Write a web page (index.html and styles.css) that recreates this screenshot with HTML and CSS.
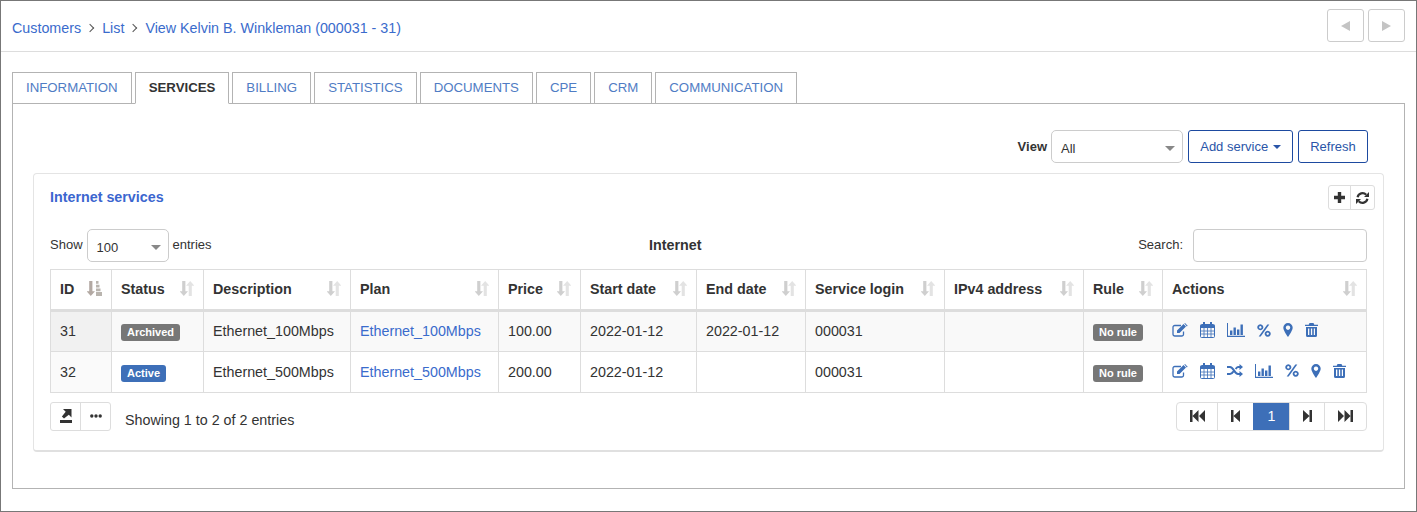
FILE: index.html
```html
<!DOCTYPE html>
<html lang="en">
<head>
    <meta charset="UTF-8">
    <meta name="viewport" content="width=device-width, initial-scale=1.0">
    <title>View customer</title>
    <link rel="stylesheet" href="styles.css">
</head>
<body>
    <!-- Icon set -->
    <svg class="icon-defs" aria-hidden="true">
        <symbol id="i-edit" viewBox="0 0 16 14">
            <path d="M11.5 8.500v2.700A1.800 1.800 0 0 1 9.700 13H2.800A1.800 1.800 0 0 1 1 11.200V4.300A1.800 1.800 0 0 1 2.800 2.500H9" fill="none" stroke="currentColor" stroke-width="1.300"/>
            <path d="M5 7.500 11.500 1l2.500 2.500-6.500 6.500H5zM12.300.3l.7-.3 2.700 2.700-.9.9z" fill="currentColor"/>
        </symbol>
        <symbol id="i-cal" viewBox="0 0 15 16">
            <path d="M1.500 2.500h12a1 1 0 0 1 1 1v11a1 1 0 0 1-1 1h-12a1 1 0 0 1-1-1v-11a1 1 0 0 1 1-1z" fill="none" stroke="currentColor"/>
            <path d="M.5 3h14v3H.5zM3 0h2v4H3zM10 0h2v4h-2z" fill="currentColor"/>
            <path d="M.5 9h14M.5 12h14M4 6v9M7.500 6v9M11 6v9" fill="none" stroke="currentColor" stroke-width=".8"/>
        </symbol>
        <symbol id="i-chart" viewBox="0 0 18 14">
            <path d="M0 0h1v12.800h17V14H0z" fill="currentColor"/>
            <path d="M3 7.500h2.400V12H3zM6.500 4.500h2.400V12H6.500zM10 6.500h2.400V12H10zM13.500 1.500h2.400V12h-2.400z" fill="currentColor"/>
        </symbol>
        <symbol id="i-pct" viewBox="0 0 14 13">
            <path d="M3.300 1.200a2.100 2.100 0 1 0 .01 0zM10.700 7.600a2.100 2.100 0 1 0 .01 0z" fill="none" stroke="currentColor" stroke-width="1.800"/>
            <path d="M10.300.5h2L3.700 12.500h-2z" fill="currentColor"/>
        </symbol>
        <symbol id="i-pin" viewBox="0 0 10 14">
            <path fill-rule="evenodd" d="M5 0a4.700 4.700 0 0 1 4.700 4.700c0 1.900-2.800 6.700-4.700 9.300C3.100 11.400.3 6.600.3 4.700A4.700 4.700 0 0 1 5 0zm0 2.500a2.200 2.200 0 1 0 .01 0z" fill="currentColor"/>
        </symbol>
        <symbol id="i-trash" viewBox="0 0 13 14">
            <path fill-rule="evenodd" d="M4.500 0h4l.8 1.800H13V3H0V1.800h3.700zM1 4h11v8.500a1.500 1.500 0 0 1-1.500 1.500h-8A1.500 1.500 0 0 1 1 12.500zm2 1.500v6.500h1.300V5.500zm2.900 0v6.500h1.300V5.500zm2.900 0v6.500H10V5.500z" fill="currentColor"/>
        </symbol>
        <symbol id="i-random" viewBox="0 0 16 13">
            <path d="M0 3h3c3.500 0 4.500 7 8 7h2M0 10h3c1.500 0 2.500-1.200 3.300-2.500M8.700 5C9.400 3.900 10 3 11 3h2" fill="none" stroke="currentColor" stroke-width="2.200"/>
            <path d="M12.500 0 16 3l-3.500 3zM12.500 7l3.500 3-3.500 3z" fill="currentColor"/>
        </symbol>
        <symbol id="i-sort" viewBox="0 0 14 15">
            <path d="M2.200 0h3.200v10.200H8L3.800 15-.4 10.200h2.600z" fill="#cfcfcf"/>
            <path d="M8.700 4.800H6L10.200 0l4.200 4.800h-2.600V15H8.700z" fill="#e3e3e3"/>
        </symbol>
        <symbol id="i-sort-on" viewBox="0 0 15 15">
            <path d="M2.200 0h3.200v10.200H8L3.800 15-.4 10.200h2.600z" fill="#b3a9a3"/>
            <path d="M9 0h2.500v2.800H9zM9 3.700h3.500v2.800H9zM9 7.400h4.500v2.800H9zM9 11.100h6V15H9z" fill="#b9b4ae"/>
        </symbol>
        <symbol id="i-plus" viewBox="0 0 11 11">
            <path d="M3.800 0h3.400v3.800H11v3.400H7.200V11H3.800V7.200H0V3.800h3.800z" fill="currentColor"/>
        </symbol>
        <symbol id="i-refresh" viewBox="0 0 13 12">
            <path d="M1.600 5.200A5 5 0 0 1 10.200 2.800M11.400 6.800a5 5 0 0 1-8.600 2.400" fill="none" stroke="currentColor" stroke-width="2.200"/>
            <path d="M13 0v5H8zM0 12V7h5z" fill="currentColor"/>
        </symbol>
        <symbol id="i-export" viewBox="0 0 12 14">
            <path d="M0 11h12v3H0z" fill="currentColor"/>
            <path d="M3 0h8.500v8.500L8.800 5.800 4 9.600 1.900 7.500 5.700 2.700z" fill="currentColor"/>
        </symbol>
        <symbol id="i-dots" viewBox="0 0 12 4">
            <circle cx="1.800" cy="2" r="1.700" fill="currentColor"/>
            <circle cx="6" cy="2" r="1.700" fill="currentColor"/>
            <circle cx="10.200" cy="2" r="1.700" fill="currentColor"/>
        </symbol>
        <symbol id="i-first" viewBox="0 0 15 12">
            <path d="M0 0h2.500v12H0zM8.500 0v12L2.500 6zM15 0v12L9 6z" fill="currentColor"/>
        </symbol>
        <symbol id="i-prev" viewBox="0 0 9 12">
            <path d="M0 0h2.500v12H0zM9 0v12L2.500 6z" fill="currentColor"/>
        </symbol>
        <symbol id="i-next" viewBox="0 0 9 12">
            <path d="M9 0H6.500v12H9zM0 0v12l6.500-6z" fill="currentColor"/>
        </symbol>
        <symbol id="i-last" viewBox="0 0 15 12">
            <path d="M15 0h-2.500v12H15zM6.500 0v12l6-6zM0 0v12l6-6z" fill="currentColor"/>
        </symbol>
    </svg>

    <div class="window">
        <!-- Breadcrumbs -->
        <header class="top-bar">
            <nav class="crumbs">
                <a href="#">Customers</a>
                <span class="crumb-sep"></span>
                <a href="#">List</a>
                <span class="crumb-sep"></span>
                <a href="#">View Kelvin B. Winkleman (000031 - 31)</a>
            </nav>
            <div class="pager-arrows">
                <button class="arrow-btn"><span class="tri tri-left"></span></button>
                <button class="arrow-btn"><span class="tri tri-right"></span></button>
            </div>
        </header>

        <main class="main">
            <ul class="tabs">
                <li class="tab"><a href="#">INFORMATION</a></li>
                <li class="tab active"><a href="#">SERVICES</a></li>
                <li class="tab"><a href="#">BILLING</a></li>
                <li class="tab"><a href="#">STATISTICS</a></li>
                <li class="tab"><a href="#">DOCUMENTS</a></li>
                <li class="tab"><a href="#">CPE</a></li>
                <li class="tab"><a href="#">CRM</a></li>
                <li class="tab"><a href="#">COMMUNICATION</a></li>
            </ul>

            <div class="tab-body">
                <div class="toolbar">
                    <label class="view-label">View</label>
                    <div class="select-box view-select"><span>All</span></div>
                    <button class="btn-outline btn-add">Add service <span class="caret"></span></button>
                    <button class="btn-outline btn-refresh">Refresh</button>
                </div>

                <section class="card">
                    <div class="card-head">
                        <h3 class="card-title">Internet services</h3>
                        <div class="btn-group card-tools">
                            <button><svg class="ico-plus"><use href="#i-plus"/></svg></button>
                            <button><svg class="ico-refresh"><use href="#i-refresh"/></svg></button>
                        </div>
                    </div>

                    <div class="table-controls">
                        <div class="length">
                            <span class="ctl-label">Show</span>
                            <div class="select-box length-select"><span>100</span></div>
                            <span class="ctl-label">entries</span>
                        </div>
                        <div class="table-name ctl-label">Internet</div>
                        <div class="search">
                            <label class="ctl-label">Search:</label>
                            <input type="text" class="search-input">
                        </div>
                    </div>

                    <table class="data-table">
                        <colgroup>
                            <col class="c-id"><col class="c-status"><col class="c-desc"><col class="c-plan"><col class="c-price">
                            <col class="c-start"><col class="c-end"><col class="c-login"><col class="c-ip"><col class="c-rule"><col class="c-actions">
                        </colgroup>
                        <thead>
                            <tr>
                                <th><div class="th-in">ID<svg class="sort sort-on"><use href="#i-sort-on"/></svg></div></th>
                                <th><div class="th-in">Status<svg class="sort"><use href="#i-sort"/></svg></div></th>
                                <th><div class="th-in">Description<svg class="sort"><use href="#i-sort"/></svg></div></th>
                                <th><div class="th-in">Plan<svg class="sort"><use href="#i-sort"/></svg></div></th>
                                <th><div class="th-in">Price<svg class="sort"><use href="#i-sort"/></svg></div></th>
                                <th><div class="th-in">Start date<svg class="sort"><use href="#i-sort"/></svg></div></th>
                                <th><div class="th-in">End date<svg class="sort"><use href="#i-sort"/></svg></div></th>
                                <th><div class="th-in">Service login<svg class="sort"><use href="#i-sort"/></svg></div></th>
                                <th><div class="th-in">IPv4 address<svg class="sort"><use href="#i-sort"/></svg></div></th>
                                <th><div class="th-in">Rule<svg class="sort"><use href="#i-sort"/></svg></div></th>
                                <th><div class="th-in">Actions<svg class="sort"><use href="#i-sort"/></svg></div></th>
                            </tr>
                        </thead>
                        <tbody>
                            <tr class="odd">
                                <td class="id-cell">31</td>
                                <td><span class="badge badge-grey">Archived</span></td>
                                <td>Ethernet_100Mbps</td>
                                <td><a href="#">Ethernet_100Mbps</a></td>
                                <td>100.00</td>
                                <td>2022-01-12</td>
                                <td>2022-01-12</td>
                                <td>000031</td>
                                <td></td>
                                <td><span class="badge badge-grey">No rule</span></td>
                                <td>
                                    <div class="actions">
                                        <svg class="a-edit"><use href="#i-edit"/></svg>
                                        <svg class="a-cal"><use href="#i-cal"/></svg>
                                        <svg class="a-chart"><use href="#i-chart"/></svg>
                                        <svg class="a-pct"><use href="#i-pct"/></svg>
                                        <svg class="a-pin"><use href="#i-pin"/></svg>
                                        <svg class="a-trash"><use href="#i-trash"/></svg>
                                    </div>
                                </td>
                            </tr>
                            <tr>
                                <td class="id-cell">32</td>
                                <td><span class="badge badge-blue">Active</span></td>
                                <td>Ethernet_500Mbps</td>
                                <td><a href="#">Ethernet_500Mbps</a></td>
                                <td>200.00</td>
                                <td>2022-01-12</td>
                                <td></td>
                                <td>000031</td>
                                <td></td>
                                <td><span class="badge badge-grey">No rule</span></td>
                                <td>
                                    <div class="actions">
                                        <svg class="a-edit"><use href="#i-edit"/></svg>
                                        <svg class="a-cal"><use href="#i-cal"/></svg>
                                        <svg class="a-random"><use href="#i-random"/></svg>
                                        <svg class="a-chart"><use href="#i-chart"/></svg>
                                        <svg class="a-pct"><use href="#i-pct"/></svg>
                                        <svg class="a-pin"><use href="#i-pin"/></svg>
                                        <svg class="a-trash"><use href="#i-trash"/></svg>
                                    </div>
                                </td>
                            </tr>
                        </tbody>
                    </table>

                    <div class="table-foot">
                        <div class="btn-group foot-tools">
                            <button><svg class="ico-export"><use href="#i-export"/></svg></button>
                            <button><svg class="ico-dots"><use href="#i-dots"/></svg></button>
                        </div>
                        <div class="info">Showing 1 to 2 of 2 entries</div>
                        <div class="paging">
                            <a href="#" class="pg pg-first"><svg class="ico-dbl"><use href="#i-first"/></svg></a>
                            <a href="#" class="pg pg-prev"><svg class="ico-one"><use href="#i-prev"/></svg></a>
                            <a href="#" class="pg pg-num current">1</a>
                            <a href="#" class="pg pg-next"><svg class="ico-one"><use href="#i-next"/></svg></a>
                            <a href="#" class="pg pg-last"><svg class="ico-dbl"><use href="#i-last"/></svg></a>
                        </div>
                    </div>
                </section>
            </div>
        </main>
    </div>
</body>
</html>
```

FILE: styles.css
```css
* {
    box-sizing: border-box;
}

html, body {
    height: 100%;
}

body {
    margin: 0;
    background-color: #fff;
    color: #333;
    font-family: "Liberation Sans", Arial, sans-serif;
    font-size: 14.3px;
}

a {
    color: #3a6bcc;
    text-decoration: none;
}

button {
    font-family: inherit;
    cursor: pointer;
}

.icon-defs {
    display: none;
}

.window {
    height: 512px;
    border: 1px solid #777;
    overflow: hidden;
}

/* Top bar */
.top-bar {
    height: 51px;
    border-bottom: 1px solid #ddd;
    padding: 0 11px;
    display: flex;
    justify-content: space-between;
    align-items: center;
}

.crumbs {
    display: flex;
    align-items: center;
    padding-top: 3px;
}

.crumb-sep {
    width: 6px;
    height: 6px;
    margin: 0 9px 0 6px;
    border-top: 1px solid #555;
    border-right: 1px solid #555;
    transform: rotate(45deg);
}

.pager-arrows {
    display: flex;
    gap: 4px;
    margin-top: -1px;
}

.arrow-btn {
    width: 37px;
    height: 33px;
    background: #fff;
    border: 1px solid #ccc;
    border-radius: 3px;
    display: flex;
    align-items: center;
    justify-content: center;
    padding: 0;
}

.tri {
    width: 0;
    height: 0;
    border-top: 5px solid transparent;
    border-bottom: 5px solid transparent;
}

.tri-left {
    border-right: 9px solid #c4c4c4;
}

.tri-right {
    border-left: 9px solid #c4c4c4;
}

/* Tabs */
.main {
    padding: 20px 11px 0;
}

.tabs {
    list-style: none;
    margin: 0;
    padding: 0;
    display: flex;
    gap: 3px;
    height: 32px;
}

.tab {
    height: 32px;
    border: 1px solid #b3b3b3;
    background: #fff;
}

.tab a {
    display: block;
    padding: 0 13px;
    line-height: 30px;
    font-size: 13.24px;
    color: #4f7cc4;
}

.tab.active {
    border-bottom-color: #fff;
    position: relative;
    z-index: 1;
}

.tab.active a {
    color: #333;
    font-weight: bold;
}

.tab-body {
    height: 386px;
    margin-top: -1px;
    border: 1px solid #b3b3b3;
    padding: 26px 20px 0;
}

.toolbar {
    display: flex;
    justify-content: flex-end;
    align-items: center;
    padding-right: 16px;
    height: 33px;
}

.view-label {
    font-size: 13px;
    font-weight: bold;
    margin-right: 4px;
    margin-top: -1px;
}

.select-box {
    position: relative;
    height: 33px;
    border: 1px solid #ccc;
    border-radius: 5px;
    background: #fff;
    font-size: 13px;
    padding: 10px 9px 0;
}

.select-box::after {
    content: "";
    position: absolute;
    right: 7px;
    top: 15px;
    border-top: 5px solid #888;
    border-left: 5px solid transparent;
    border-right: 5px solid transparent;
}

.view-select {
    width: 132px;
    margin-right: 5px;
}

.btn-outline {
    height: 33px;
    background: #fff;
    border: 1px solid #1d4aa0;
    border-radius: 3px;
    color: #2a55a8;
    font-size: 13px;
    padding: 0;
}

.btn-add {
    width: 105px;
}

.btn-refresh {
    width: 70px;
    margin-left: 5px;
}

.caret {
    display: inline-block;
    vertical-align: 2px;
    margin-left: 1px;
    border-top: 4px solid #2a55a8;
    border-left: 4px solid transparent;
    border-right: 4px solid transparent;
}

/* Card */
.card {
    margin-top: 10px;
    height: 279px;
    border: 1px solid #e4e4e4;
    border-bottom: 2px solid #e0e0e0;
    border-radius: 4px;
    padding: 11px 16px 0;
}

.card-head {
    display: flex;
    justify-content: space-between;
    align-items: flex-start;
    height: 44px;
}

.card-title {
    margin: 4px 0 0;
    font-size: 14.3px;
    font-weight: bold;
    color: #3b66cf;
}

.btn-group {
    display: flex;
    border: 1px solid #ddd;
    border-radius: 3px;
    background: #fff;
}

.btn-group button {
    background: none;
    border: 0;
    padding: 0;
    display: flex;
    align-items: center;
    justify-content: center;
    color: #333;
}

.btn-group button + button {
    border-left: 1px solid #ddd;
}

.card-tools {
    margin-right: -8px;
    height: 25px;
}

.card-tools button {
    width: 21px;
}

.card-tools button + button {
    width: 24px;
}

.ico-plus {
    width: 11px;
    height: 11px;
}

.ico-refresh {
    width: 13px;
    height: 12px;
}

.table-controls {
    display: grid;
    grid-template-columns: 599px auto 1fr;
    align-items: center;
    height: 33px;
    font-size: 13px;
}

.ctl-label {
    margin-bottom: 2px;
}

.length {
    display: flex;
    align-items: center;
    gap: 4px;
}

.length-select {
    width: 82px;
}

.table-name {
    font-size: 14.3px;
    font-weight: bold;
}

.search {
    display: flex;
    justify-content: flex-end;
    align-items: center;
    gap: 10px;
}

.search-input {
    width: 174px;
    height: 33px;
    border: 1px solid #ccc;
    border-radius: 4px;
}

/* Table */
.data-table {
    width: 1316px;
    margin-top: 7px;
    table-layout: fixed;
    border-collapse: collapse;
}

.c-id { width: 61px; }
.c-status { width: 92px; }
.c-desc { width: 147px; }
.c-plan { width: 148px; }
.c-price { width: 82px; }
.c-start { width: 116px; }
.c-end { width: 109px; }
.c-login { width: 139px; }
.c-ip { width: 139px; }
.c-rule { width: 79px; }
.c-actions { width: 204px; }

.data-table th,
.data-table td {
    border: 1px solid #ddd;
    padding: 0 9px;
    text-align: left;
    white-space: nowrap;
}

.data-table th {
    height: 41px;
    padding-bottom: 2px;
    border-bottom-width: 3px;
    font-weight: bold;
}

.data-table td {
    height: 41px;
}

.data-table .odd td {
    padding-bottom: 2px;
    background-color: #f9f9f9;
}

.th-in {
    display: flex;
    justify-content: space-between;
    align-items: center;
}

.sort {
    width: 14px;
    height: 15px;
}

.sort-on {
    width: 15px;
}

.data-table .odd .id-cell {
    background-color: #f1f1f1;
}

.id-cell {
    background-color: #fafafa;
}

.badge {
    display: inline-block;
    height: 17px;
    line-height: 17px;
    margin-top: 2px;
    padding: 0 6px;
    border-radius: 3px;
    font-size: 11px;
    font-weight: bold;
    color: #fff;
    vertical-align: middle;
}

.odd .badge {
    margin-top: 4px;
}

.badge-grey {
    background-color: #777;
}

.badge-blue {
    background-color: #3d6fb8;
}

.actions {
    display: flex;
    align-items: center;
    gap: 12px;
    margin-top: -3px;
    color: #3d6fb8;
}

.odd .actions {
    margin-top: -1px;
}

.a-edit { width: 16px; height: 14px; }
.a-cal { width: 15px; height: 16px; }
.a-chart { width: 18px; height: 14px; }
.a-pct { width: 14px; height: 13px; }
.a-pin { width: 10px; height: 14px; }
.a-trash { width: 13px; height: 14px; }
.a-random { width: 16px; height: 13px; }

/* Footer of the table */
.table-foot {
    display: flex;
    align-items: center;
    margin-top: 8px;
    height: 30px;
}

.foot-tools {
    height: 29px;
    width: 61px;
}

.foot-tools button {
    flex: 1;
}

.ico-export {
    width: 12px;
    height: 14px;
    margin-bottom: 1px;
}

.ico-dots {
    width: 12px;
    height: 4px;
}

.info {
    margin-left: 14px;
    margin-top: 8px;
    flex: 1;
}

.paging {
    display: flex;
    height: 29px;
    border: 1px solid #ddd;
    border-radius: 4px;
    overflow: hidden;
}

.pg {
    display: flex;
    align-items: center;
    justify-content: center;
    color: #333;
}

.pg + .pg {
    border-left: 1px solid #ddd;
}

.pg-first { width: 40px; }
.pg-prev { width: 36px; }
.pg-num { width: 36px; }
.pg-next { width: 35px; }
.pg-last { width: 42px; }

.pg.current {
    background-color: #3d6fb8;
    border-left-color: #3d6fb8;
    color: #fff;
}

.ico-dbl {
    width: 15px;
    height: 12px;
}

.ico-one {
    width: 9px;
    height: 12px;
}
```
